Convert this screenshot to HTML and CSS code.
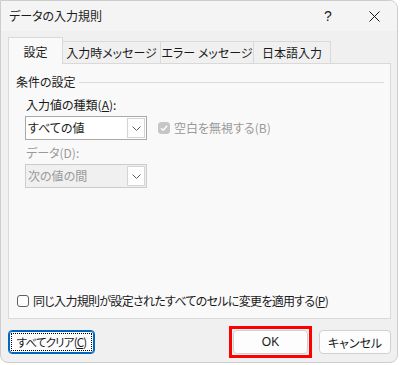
FILE: index.html
```html
<!DOCTYPE html>
<html lang="ja">
<head>
    <meta charset="UTF-8">
    <title>データの入力規則</title>
    <link rel="stylesheet" href="styles.css">
</head>
<body>
    <div class="window">
        <div class="titlebar">
            <div class="title">データの入力規則</div>
            <div class="title-btn">?</div>
            <div class="title-btn">
                <svg width="11" height="11" viewBox="0 0 11 11"><path d="M0.5 0.5L10.5 10.5M10.5 0.5L0.5 10.5" stroke="#1a1a1a" stroke-width="1"/></svg>
            </div>
        </div>

        <div class="dialog-body">
            <div class="tabs">
                <div class="tab active tab-1">設定</div>
                <div class="tab tab-2">入力時メッセージ</div>
                <div class="tab tab-3">エラー メッセージ</div>
                <div class="tab tab-4">日本語入力</div>
            </div>

            <div class="panel">
                <div class="group-title"><span>条件の設定</span></div>

                <div class="group">
                    <div class="label">入力値の種類(<u>A</u>):</div>
                    <div class="row">
                        <div class="select">
                            <span class="select-text">すべての値</span>
                            <span class="select-btn">
                                <svg width="9" height="5" viewBox="0 0 9 5"><path d="M0.5 0.5L4.5 4.5L8.5 0.5" fill="none" stroke="#5a5a5a" stroke-width="1"/></svg>
                            </span>
                        </div>
                        <div class="check disabled">
                            <span class="box checked">
                                <svg width="10" height="10" viewBox="0 0 10 10"><path d="M2 5.2L4.2 7.3L8.2 2.8" fill="none" stroke="#fff" stroke-width="1.3"/></svg>
                            </span>
                            空白を無視する(B)
                        </div>
                    </div>

                    <div class="label disabled label-2">データ(D):</div>
                    <div class="select disabled">
                        <span class="select-text">次の値の間</span>
                        <span class="select-btn">
                            <svg width="9" height="5" viewBox="0 0 9 5"><path d="M0.5 0.5L4.5 4.5L8.5 0.5" fill="none" stroke="#5a5a5a" stroke-width="1"/></svg>
                        </span>
                    </div>
                </div>

                <div class="check apply-all">
                    <span class="box"></span>
                    同じ入力規則が設定されたすべてのセルに変更を適用する(<u>P</u>)
                </div>
            </div>

            <div class="buttons">
                <button class="btn btn-clear"><span class="focus-rect">すべてクリア(<u>C</u>)</span></button>
                <!-- red highlight around OK -->
                <div class="highlight">
                    <button class="btn btn-ok">OK</button>
                </div>
                <button class="btn btn-cancel">キャンセル</button>
            </div>
        </div>
    </div>
</body>
</html>
```

FILE: styles.css
```css
body {
    margin: 0;
    background-color: #ffffff;
    font-family: "Noto Sans CJK JP", "Noto Sans", sans-serif;
    font-size: 12px;
    font-feature-settings: "palt";
    color: #1a1a1a;
}

.window {
    width: 398px;
    height: 363px;
    box-sizing: border-box;
    border: 1px solid #cdcdcd;
    border-radius: 0 8px 8px 8px;
    background-color: #f0f0f0;
    display: flex;
    flex-direction: column;
    overflow: hidden;
}

.titlebar {
    height: 30px;
    display: flex;
    align-items: center;
    background-color: #f4f4f4;
}

.title {
    flex: 1;
    padding-left: 8px;
    line-height: 16px;
}

.title-btn {
    width: 46px;
    height: 30px;
    display: flex;
    align-items: center;
    justify-content: center;
    font-family: "Liberation Sans", sans-serif;
    font-size: 14px;
}

.dialog-body {
    flex: 1;
    padding: 6px 6px 0 7px;
    display: flex;
    flex-direction: column;
}

/* tabs */
.tabs {
    display: flex;
    align-items: flex-end;
    height: 26px;
    position: relative;
    z-index: 1;
}

.tab {
    height: 22px;
    box-sizing: border-box;
    border: 1px solid #d9d9d9;
    border-bottom: none;
    border-left: none;
    background-color: #f0f0f0;
    text-align: center;
    line-height: 22px;
}

.tab.active {
    height: 27px;
    margin-bottom: -1px;
    border-left: 1px solid #d9d9d9;
    background-color: #f9f9f9;
    line-height: 28px;
}

.tab-1 { width: 55px; }
.tab-2 { width: 98px; }
.tab-3 { width: 93px; }
.tab-4 { width: 77px; }

.panel {
    height: 256px;
    box-sizing: border-box;
    border: 1px solid #d9d9d9;
    background-color: #f9f9f9;
    padding: 10px 6px 9px 7px;
    display: flex;
    flex-direction: column;
}

.group-title {
    display: flex;
    align-items: center;
    gap: 3px;
    line-height: 16px;
}

.group-title::after {
    content: "";
    flex: 1;
    border-top: 1px solid #dcdcdc;
}

.group {
    padding-left: 9px;
}

.label {
    line-height: 16px;
    margin: 7px 0 3px 1px;
}

.label-2 {
    margin-top: 5px;
}

.disabled {
    color: #9a9a9a;
}

.row {
    display: flex;
    align-items: center;
}

.select {
    width: 122px;
    height: 24px;
    box-sizing: border-box;
    border: 1px solid #a8a8a8;
    background-color: #ffffff;
    display: flex;
    align-items: stretch;
}

.select.disabled {
    border-color: #cccccc;
    background-color: #f0f0f0;
}

.select-text {
    flex: 1;
    padding-left: 2px;
    line-height: 22px;
}

.select-btn {
    width: 16px;
    margin: 1px;
    border: 1px solid #d4d4d4;
    background-color: #ffffff;
    display: flex;
    align-items: center;
    justify-content: center;
}

/* checkboxes */
.check {
    display: flex;
    align-items: center;
    line-height: 16px;
    white-space: nowrap;
}

.row .check {
    margin-left: 11px;
}

.box {
    width: 12px;
    height: 12px;
    box-sizing: border-box;
    border: 1px solid #5f5f5f;
    border-radius: 3px;
    background-color: #fdfdfd;
    margin-right: 4px;
    display: flex;
    align-items: center;
    justify-content: center;
}

.box.checked {
    border-color: #c6c6c6;
    background-color: #c6c6c6;
}

.apply-all {
    margin-top: auto;
    margin-left: 1px;
    letter-spacing: -0.7px;
}

/* buttons */
.buttons {
    display: flex;
    margin-top: 11px;
}

.btn {
    height: 24px;
    box-sizing: border-box;
    border: 1px solid #d0d0d0;
    border-radius: 4px;
    background-color: #fdfdfd;
    font-family: inherit;
    font-size: 12px;
    font-feature-settings: "palt";
    color: #1a1a1a;
    padding: 0;
    white-space: nowrap;
}

.btn-clear {
    width: 87px;
    border-color: #0067c0;
    box-shadow: inset 0 0 0 1px #0067c0;
    padding: 2px;
    margin-right: auto;
}

.focus-rect {
    display: block;
    height: 100%;
    box-sizing: border-box;
    border: 1px dotted #000000;
    line-height: 16px;
    font-size: 11.5px;
    letter-spacing: -0.8px;
}

.highlight {
    display: flex;
    margin-right: 11px;
    outline: 3px solid #ff0000;
    outline-offset: 1px;
}

.btn-ok {
    width: 75px;
    font-family: "Liberation Sans", sans-serif;
}

.btn-cancel {
    width: 72px;
}
```
